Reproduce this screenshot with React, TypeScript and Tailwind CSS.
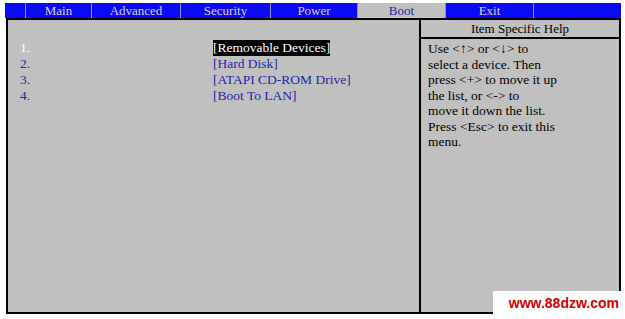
import React from 'react';

const tabs = [
  { label: '', w: 'w-[20px]' },
  { label: 'Main', w: 'w-[66px]' },
  { label: 'Advanced', w: 'w-[89px]' },
  { label: 'Security', w: 'w-[90px]' },
  { label: 'Power', w: 'w-[87px]' },
  { label: 'Boot', w: 'w-[88px]', active: true },
  { label: 'Exit', w: 'w-[88px]' },
  { label: '', w: 'w-[88px]' },
];

const devices = [
  '[Removable Devices]',
  '[Hard Disk]',
  '[ATAPI CD-ROM Drive]',
  '[Boot To LAN]',
];

const helpLines = [
  'Use <\u2191> or <\u2193> to',
  'select a device. Then',
  'press <+> to move it up',
  'the list, or <-> to',
  'move it down the list.',
  'Press <Esc> to exit this',
  'menu.',
];

const TabBar = () => {
  return (
    <div className="ml-[5px] flex h-[15px] w-[616px] bg-[#0a0af5]">
      {tabs.map((tab, i) => (
        <div
          key={i}
          className={`${tab.w} flex items-center justify-center text-[13px] leading-none ${
            i > 0 ? 'border-l border-[#8c8cd8]' : ''
          } ${tab.active ? 'bg-[#c0c0c0] text-[#2424a8]' : 'text-[#d4d4e4]'}`}
        >
          {tab.label}
        </div>
      ))}
    </div>
  );
};

const BootList = () => {
  return (
    <div className="flex-1 pl-[12px] pt-[20px] text-[13.5px] leading-[16px]">
      {devices.map((name, i) => (
        <div key={name} className="flex">
          <span
            className={`w-[193px] ${i === 0 ? 'text-white' : 'text-[#2424a8]'}`}
          >
            {i + 1}.
          </span>
          {i === 0 ? (
            <span className="bg-black text-white">{name}</span>
          ) : (
            <span className="text-[#2424a8]">{name}</span>
          )}
        </div>
      ))}
    </div>
  );
};

const HelpPanel = () => {
  return (
    <div className="flex w-[200px] flex-col border-l-2 border-black">
      <div className="flex h-[19px] items-center justify-center border-b-2 border-black text-[13px] text-black">
        Item Specific Help
      </div>
      <div className="pl-[7px] pt-[2px] text-[13.5px] leading-[15.5px] text-black">
        {helpLines.map((line) => (
          <p key={line}>{line}</p>
        ))}
      </div>
    </div>
  );
};

export default function App() {
  return (
    <div
      className="relative h-[319px] w-[625px] overflow-hidden bg-white"
      style={{ fontFamily: '"Liberation Serif", "Times New Roman", serif' }}
    >
      <div className="h-[3px]" />
      <TabBar />
      <div className="ml-[6px] flex h-[296px] w-[615px] border-2 border-black bg-[#c0c0c0]">
        <BootList />
        <HelpPanel />
      </div>

      {/* site watermark pasted over the corner */}
      <div className="absolute left-[493px] top-[291px] flex h-[23px] w-[128px] items-center justify-end bg-white pr-[2px]">
        <span
          className="text-[14px] font-bold leading-none text-[#d40000]"
          style={{ fontFamily: '"Liberation Sans", Arial, sans-serif' }}
        >
          www.88dzw.com
        </span>
      </div>
    </div>
  );
}
